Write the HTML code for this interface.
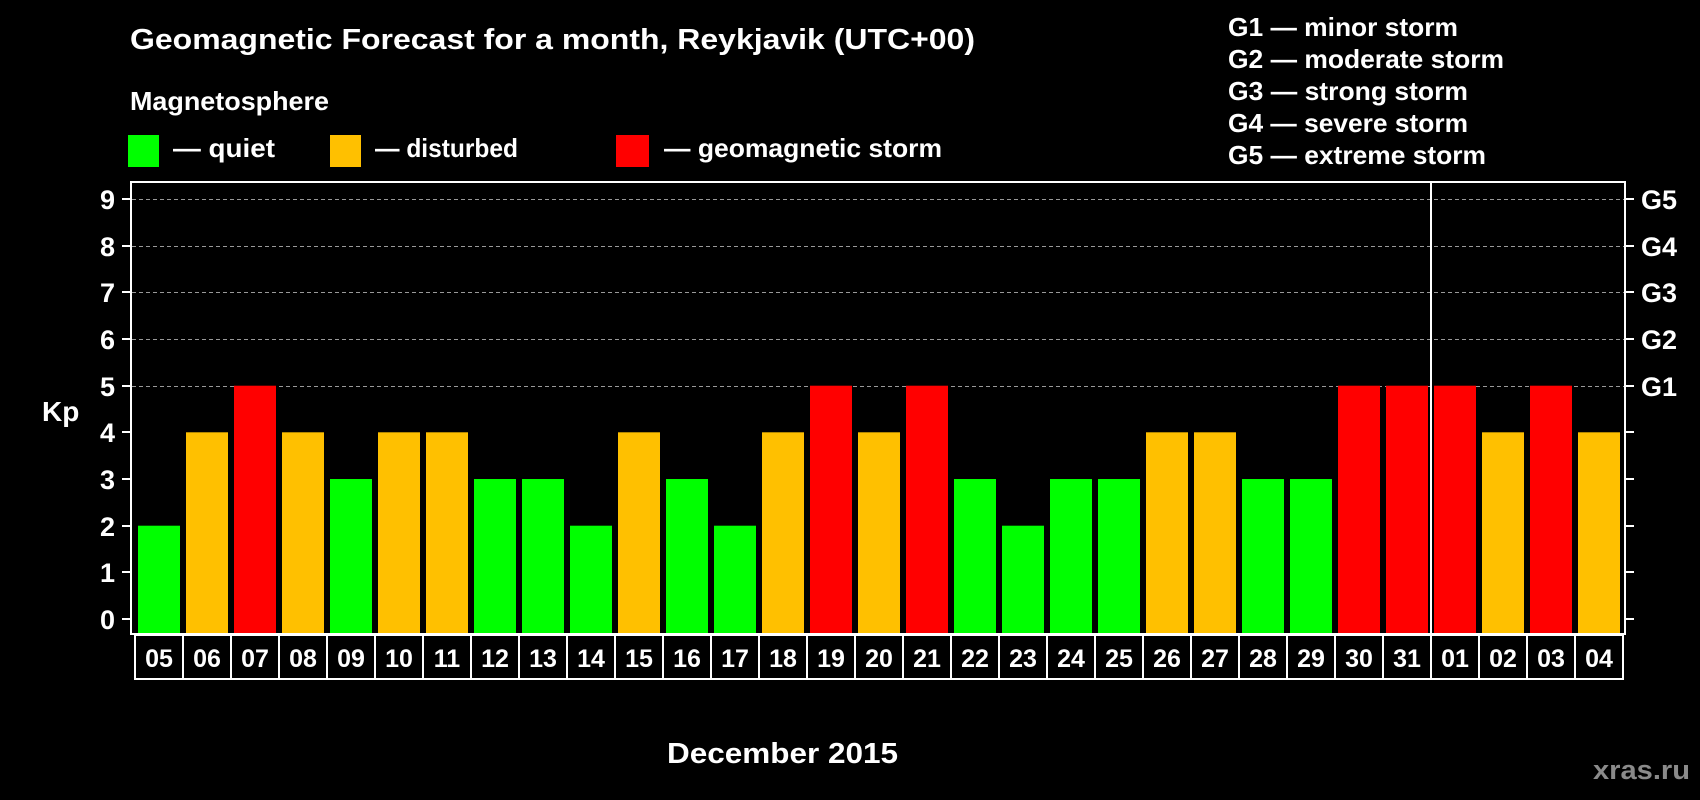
<!DOCTYPE html>
<html><head><meta charset="utf-8"><style>html,body{margin:0;padding:0;background:#000;}svg{display:block}</style></head>
<body>
<svg width="1700" height="800" viewBox="0 0 1700 800" xmlns="http://www.w3.org/2000/svg" font-family="Liberation Sans, Arial, sans-serif" font-weight="bold" fill="#fff">
<rect width="1700" height="800" fill="#000"/>
<text x="130" y="49" font-size="29" textLength="845" lengthAdjust="spacingAndGlyphs">Geomagnetic Forecast for a month, Reykjavik (UTC+00)</text>
<text x="130" y="110" font-size="26" textLength="199" lengthAdjust="spacingAndGlyphs">Magnetosphere</text>
<rect x="128" y="135" width="31" height="32" fill="#00ff00"/>
<rect x="330" y="135" width="31" height="32" fill="#ffc000"/>
<rect x="616" y="135" width="33" height="32" fill="#ff0000"/>
<text x="173" y="157" font-size="26" textLength="102" lengthAdjust="spacingAndGlyphs">— quiet</text>
<text x="375" y="157" font-size="26" textLength="143" lengthAdjust="spacingAndGlyphs">— disturbed</text>
<text x="664" y="157" font-size="26" textLength="278" lengthAdjust="spacingAndGlyphs">— geomagnetic storm</text>
<g font-size="26">
<text x="1228" y="36" textLength="230" lengthAdjust="spacingAndGlyphs">G1 — minor storm</text>
<text x="1228" y="68" textLength="276" lengthAdjust="spacingAndGlyphs">G2 — moderate storm</text>
<text x="1228" y="100" textLength="240" lengthAdjust="spacingAndGlyphs">G3 — strong storm</text>
<text x="1228" y="132" textLength="240" lengthAdjust="spacingAndGlyphs">G4 — severe storm</text>
<text x="1228" y="164" textLength="258" lengthAdjust="spacingAndGlyphs">G5 — extreme storm</text>
</g>
<g stroke="#999" stroke-width="1" stroke-dasharray="4,3">
<line x1="132" y1="199.5" x2="1624" y2="199.5"/>
<line x1="132" y1="246.5" x2="1624" y2="246.5"/>
<line x1="132" y1="292.5" x2="1624" y2="292.5"/>
<line x1="132" y1="339.5" x2="1624" y2="339.5"/>
<line x1="132" y1="386.5" x2="1624" y2="386.5"/>
</g>
<g>
<rect x="138" y="525.7" width="42" height="108.3" fill="#00ff00"/>
<rect x="186" y="432.3" width="42" height="201.7" fill="#ffc000"/>
<rect x="234" y="385.7" width="42" height="248.3" fill="#ff0000"/>
<rect x="282" y="432.3" width="42" height="201.7" fill="#ffc000"/>
<rect x="330" y="479" width="42" height="155" fill="#00ff00"/>
<rect x="378" y="432.3" width="42" height="201.7" fill="#ffc000"/>
<rect x="426" y="432.3" width="42" height="201.7" fill="#ffc000"/>
<rect x="474" y="479" width="42" height="155" fill="#00ff00"/>
<rect x="522" y="479" width="42" height="155" fill="#00ff00"/>
<rect x="570" y="525.7" width="42" height="108.3" fill="#00ff00"/>
<rect x="618" y="432.3" width="42" height="201.7" fill="#ffc000"/>
<rect x="666" y="479" width="42" height="155" fill="#00ff00"/>
<rect x="714" y="525.7" width="42" height="108.3" fill="#00ff00"/>
<rect x="762" y="432.3" width="42" height="201.7" fill="#ffc000"/>
<rect x="810" y="385.7" width="42" height="248.3" fill="#ff0000"/>
<rect x="858" y="432.3" width="42" height="201.7" fill="#ffc000"/>
<rect x="906" y="385.7" width="42" height="248.3" fill="#ff0000"/>
<rect x="954" y="479" width="42" height="155" fill="#00ff00"/>
<rect x="1002" y="525.7" width="42" height="108.3" fill="#00ff00"/>
<rect x="1050" y="479" width="42" height="155" fill="#00ff00"/>
<rect x="1098" y="479" width="42" height="155" fill="#00ff00"/>
<rect x="1146" y="432.3" width="42" height="201.7" fill="#ffc000"/>
<rect x="1194" y="432.3" width="42" height="201.7" fill="#ffc000"/>
<rect x="1242" y="479" width="42" height="155" fill="#00ff00"/>
<rect x="1290" y="479" width="42" height="155" fill="#00ff00"/>
<rect x="1338" y="385.7" width="42" height="248.3" fill="#ff0000"/>
<rect x="1386" y="385.7" width="42" height="248.3" fill="#ff0000"/>
<rect x="1434" y="385.7" width="42" height="248.3" fill="#ff0000"/>
<rect x="1482" y="432.3" width="42" height="201.7" fill="#ffc000"/>
<rect x="1530" y="385.7" width="42" height="248.3" fill="#ff0000"/>
<rect x="1578" y="432.3" width="42" height="201.7" fill="#ffc000"/>
</g>
<rect x="131" y="182" width="1494" height="452" fill="none" stroke="#fff" stroke-width="2"/>
<line x1="1431" y1="182" x2="1431" y2="634" stroke="#fff" stroke-width="2"/>
<g stroke="#fff" stroke-width="2">
<line x1="122" y1="199" x2="131" y2="199"/><line x1="122" y1="246" x2="131" y2="246"/><line x1="122" y1="292" x2="131" y2="292"/><line x1="122" y1="339" x2="131" y2="339"/><line x1="122" y1="386" x2="131" y2="386"/><line x1="122" y1="432" x2="131" y2="432"/><line x1="122" y1="479" x2="131" y2="479"/><line x1="122" y1="526" x2="131" y2="526"/><line x1="122" y1="572" x2="131" y2="572"/><line x1="122" y1="619" x2="131" y2="619"/>
<line x1="1625" y1="199" x2="1634" y2="199"/><line x1="1625" y1="246" x2="1634" y2="246"/><line x1="1625" y1="292" x2="1634" y2="292"/><line x1="1625" y1="339" x2="1634" y2="339"/><line x1="1625" y1="386" x2="1634" y2="386"/><line x1="1625" y1="432" x2="1634" y2="432"/><line x1="1625" y1="479" x2="1634" y2="479"/><line x1="1625" y1="526" x2="1634" y2="526"/><line x1="1625" y1="572" x2="1634" y2="572"/><line x1="1625" y1="619" x2="1634" y2="619"/>
</g>
<g font-size="27" text-anchor="end">
<text x="115" y="209">9</text><text x="115" y="256">8</text><text x="115" y="302">7</text><text x="115" y="349">6</text><text x="115" y="396">5</text><text x="115" y="442">4</text><text x="115" y="489">3</text><text x="115" y="536">2</text><text x="115" y="582">1</text><text x="115" y="629">0</text>
</g>
<g font-size="27">
<text x="1641" y="209">G5</text><text x="1641" y="256">G4</text><text x="1641" y="302">G3</text><text x="1641" y="349">G2</text><text x="1641" y="396">G1</text>
</g>
<text x="42" y="421" font-size="28">Kp</text>
<rect x="135" y="635" width="1488" height="44" fill="none" stroke="#fff" stroke-width="2"/>
<g stroke="#fff" stroke-width="2">
<line x1="183" y1="635" x2="183" y2="679"/><line x1="231" y1="635" x2="231" y2="679"/><line x1="279" y1="635" x2="279" y2="679"/><line x1="327" y1="635" x2="327" y2="679"/><line x1="375" y1="635" x2="375" y2="679"/><line x1="423" y1="635" x2="423" y2="679"/><line x1="471" y1="635" x2="471" y2="679"/><line x1="519" y1="635" x2="519" y2="679"/><line x1="567" y1="635" x2="567" y2="679"/><line x1="615" y1="635" x2="615" y2="679"/><line x1="663" y1="635" x2="663" y2="679"/><line x1="711" y1="635" x2="711" y2="679"/><line x1="759" y1="635" x2="759" y2="679"/><line x1="807" y1="635" x2="807" y2="679"/><line x1="855" y1="635" x2="855" y2="679"/><line x1="903" y1="635" x2="903" y2="679"/><line x1="951" y1="635" x2="951" y2="679"/><line x1="999" y1="635" x2="999" y2="679"/><line x1="1047" y1="635" x2="1047" y2="679"/><line x1="1095" y1="635" x2="1095" y2="679"/><line x1="1143" y1="635" x2="1143" y2="679"/><line x1="1191" y1="635" x2="1191" y2="679"/><line x1="1239" y1="635" x2="1239" y2="679"/><line x1="1287" y1="635" x2="1287" y2="679"/><line x1="1335" y1="635" x2="1335" y2="679"/><line x1="1383" y1="635" x2="1383" y2="679"/><line x1="1431" y1="635" x2="1431" y2="679"/><line x1="1479" y1="635" x2="1479" y2="679"/><line x1="1527" y1="635" x2="1527" y2="679"/><line x1="1575" y1="635" x2="1575" y2="679"/>
</g>
<g font-size="25" text-anchor="middle">
<text x="159" y="667">05</text><text x="207" y="667">06</text><text x="255" y="667">07</text><text x="303" y="667">08</text><text x="351" y="667">09</text><text x="399" y="667">10</text><text x="447" y="667">11</text><text x="495" y="667">12</text><text x="543" y="667">13</text><text x="591" y="667">14</text><text x="639" y="667">15</text><text x="687" y="667">16</text><text x="735" y="667">17</text><text x="783" y="667">18</text><text x="831" y="667">19</text><text x="879" y="667">20</text><text x="927" y="667">21</text><text x="975" y="667">22</text><text x="1023" y="667">23</text><text x="1071" y="667">24</text><text x="1119" y="667">25</text><text x="1167" y="667">26</text><text x="1215" y="667">27</text><text x="1263" y="667">28</text><text x="1311" y="667">29</text><text x="1359" y="667">30</text><text x="1407" y="667">31</text><text x="1455" y="667">01</text><text x="1503" y="667">02</text><text x="1551" y="667">03</text><text x="1599" y="667">04</text>
</g>
<text x="667" y="763" font-size="29" textLength="231" lengthAdjust="spacingAndGlyphs">December 2015</text>
<text x="1593" y="779" font-size="27" fill="#8a8a8a" textLength="97" lengthAdjust="spacingAndGlyphs">xras.ru</text>
</svg>
</body></html>
